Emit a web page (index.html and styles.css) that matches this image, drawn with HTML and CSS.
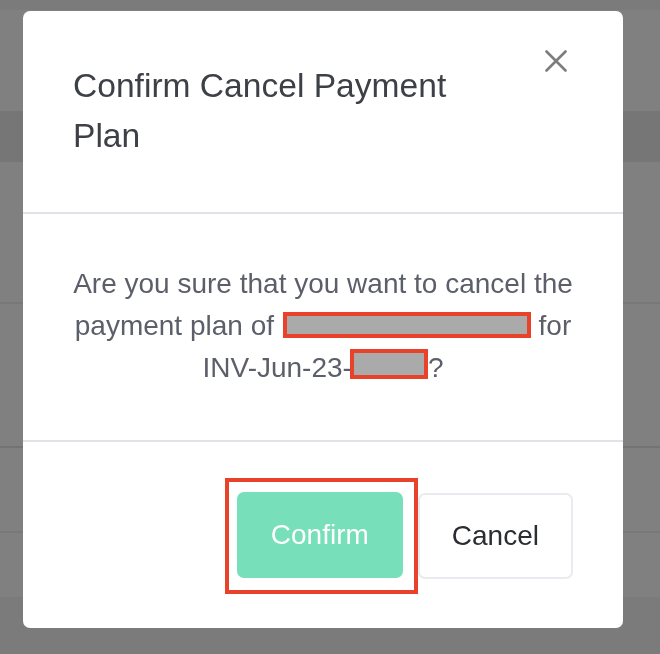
FILE: index.html
```html
<!DOCTYPE html>
<html lang="en">
<head>
<meta charset="utf-8">
<title>Confirm Cancel Payment Plan</title>
<link rel="stylesheet" href="styles.css">
</head>
<body>
<div class="page">
  <div class="pg-top"></div>
  <div class="pg-gap g1"></div>
  <div class="pg-band"></div>
  <div class="pg-gap g2"></div>
  <div class="pg-line"></div>
  <div class="pg-gap g3"></div>
  <div class="pg-line dark"></div>
  <div class="pg-gap g4"></div>
  <div class="pg-line"></div>
  <div class="pg-gap g5"></div>
  <div class="pg-bottom"></div>
</div>

<div class="overlay">
  <div class="modal" role="dialog" aria-labelledby="mtitle">
    <div class="modal-header">
      <h2 class="modal-title" id="mtitle">Confirm Cancel Payment Plan</h2>
      <button class="close" aria-label="Close">
        <svg width="22" height="22" viewBox="0 0 22 22"><path d="M1.5 1.5 L20.5 20.5 M20.5 1.5 L1.5 20.5" stroke="#7d7d7d" stroke-width="2.6" stroke-linecap="round" fill="none"/></svg>
      </button>
    </div>
    <div class="modal-body">
      <p class="msg">Are you sure that you want to cancel the payment plan of <span class="redact wide"></span> for INV-Jun-23-<span class="redact short"></span>?</p>
    </div>
    <div class="modal-footer">
      <span class="highlight"><button class="btn btn-confirm">Confirm</button></span>
      <button class="btn btn-cancel">Cancel</button>
    </div>
  </div>
</div>
</body>
</html>
```

FILE: styles.css
```css
* { box-sizing: border-box; }

html, body {
  margin: 0;
  padding: 0;
}

body {
  width: 660px;
  height: 654px;
  overflow: hidden;
  background: #808080;
  font-family: "Liberation Sans", Arial, sans-serif;
}

/* dimmed page behind the dialog */
.page {
  display: flex;
  flex-direction: column;
  height: 654px;
}
.pg-top { height: 10px; background: #7b7b7b; }
.pg-gap { background: #808080; }
.g1 { height: 101px; }
.pg-band { height: 51px; background: #767676; }
.g2 { height: 140px; }
.pg-line { height: 2px; background: #787878; }
.pg-line.dark { background: #737373; }
.g3 { height: 142px; }
.g4 { height: 83px; }
.g5 { height: 64px; }
.pg-bottom { flex: 1; background: #7b7b7b; }

/* overlay */
.overlay {
  position: fixed;
  inset: 0;
  padding: 11px 0 0 23px;
}

.modal {
  width: 600px;
  background: #ffffff;
  border-radius: 7px;
  overflow: hidden;
}

.modal-header {
  display: flex;
  align-items: flex-start;
  padding: 50px 50px 52px 50px;
  border-bottom: 2px solid #dfe2e6;
}

.modal-title {
  flex: 1;
  margin: 0;
  max-width: 420px;
  font-size: 33.6px;
  font-weight: normal;
  line-height: 49.5px;
  color: #3e4047;
}

.close {
  margin: -11px 6px 0 auto;
  padding: 0;
  width: 22px;
  height: 22px;
  border: 0;
  background: none;
  display: flex;
}

.modal-body {
  padding: 49px 50px 51px;
  border-bottom: 2px solid #dfe2e6;
}

.msg {
  margin: 0;
  text-align: center;
  font-size: 28px;
  line-height: 42px;
  color: #5c5f69;
}

.redact {
  display: inline-block;
  background: #aaaaaa;
  border: 4px solid #e8432a;
}
.redact.wide {
  width: 248px;
  height: 26px;
  margin-left: 1px;
  vertical-align: -3px;
}
.redact.short {
  width: 78px;
  height: 30px;
  margin-left: -2px;
  vertical-align: -2px;
}

.modal-footer {
  display: flex;
  justify-content: flex-end;
  align-items: center;
  padding: 36px 50px 34px;
}

.highlight {
  display: flex;
  border: 4px solid #e8432a;
  padding: 10px 11px 12px 8px;
}

.btn {
  font-family: "Liberation Sans", Arial, sans-serif;
  font-size: 28px;
  line-height: 42px;
  padding: 20px 32px;
  border-radius: 7px;
  border: 2px solid transparent;
  cursor: pointer;
}

.btn-confirm {
  background: #77dfba;
  border-color: #77dfba;
  color: #ffffff;
}

.btn-cancel {
  background: #ffffff;
  border-color: #eaebf0;
  color: #2b2d33;
}
```
